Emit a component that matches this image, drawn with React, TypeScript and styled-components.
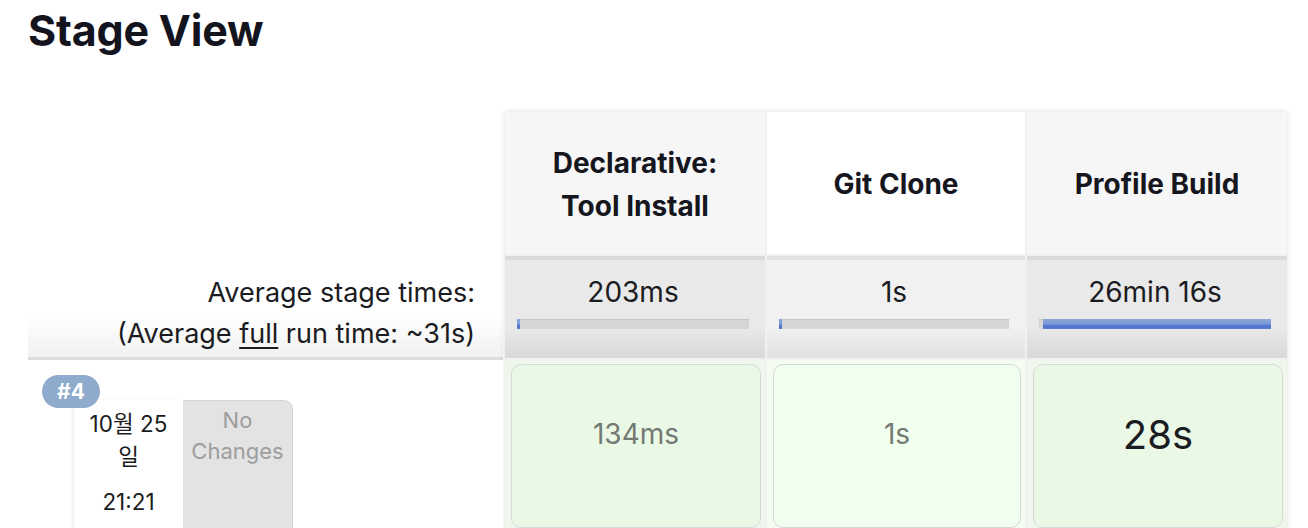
import React from "react";
import styled, { createGlobalStyle } from "styled-components";

const Global = createGlobalStyle`
  html, body { margin: 0; padding: 0; background: #fff; }
  body { font-family: "Inter", "Noto Sans CJK KR", sans-serif; color: #14141f; }
  * { box-sizing: border-box; }
`;

const Page = styled.div`
  width: 1308px;
  height: 528px;
  overflow: hidden;
  padding-left: 28px;
`;

const Title = styled.h1`
  margin: 0;
  padding-top: 6px;
  height: 54px;
  font-size: 43px;
  line-height: 48px;
  font-weight: 700;
  letter-spacing: -0.2px;
  color: #14141f;
`;

const Board = styled.div`
  display: flex;
  gap: 2px;
  margin-top: 58px;
`;

const LabelColumn = styled.div`
  width: 475px;
  display: flex;
  flex-direction: column;
`;

const HeadSpacer = styled.div`
  height: 142px;
`;

const AverageLabel = styled.div`
  height: 106px;
  padding: 18px 28px 0 0;
  text-align: right;
  font-size: 27px;
  line-height: 41px;
  color: #1b1b22;
  background: linear-gradient(to bottom, #ffffff 0%, #ffffff 60%, #f1f1f1 100%);
  border-bottom: 3px solid #dcdcdc;
  u { text-decoration-thickness: 2px; text-underline-offset: 4px; }
`;

const BuildLabel = styled.div`
  position: relative;
  height: 170px;
  padding: 40px 0 0 45px;
  background: #fff;
`;

const Badge = styled.div`
  position: absolute;
  left: 14px;
  top: 15px;
  width: 58px;
  height: 33px;
  border-radius: 17px;
  background: #8eaacd;
  color: #fff;
  font-weight: 700;
  font-size: 21px;
  line-height: 33px;
  text-align: center;
  z-index: 2;
`;

const BuildBox = styled.div`
  display: flex;
`;

const DateBox = styled.div`
  width: 110px;
  height: 130px;
  background: #fff;
  border-left: 1px solid #ececec;
  box-shadow: -1px 0 2px rgba(0, 0, 0, 0.06);
  padding-top: 7px;
  text-align: center;
  font-size: 22.5px;
  line-height: 33px;
  color: #1b1b22;
`;

const TimeLine = styled.div`
  margin-top: 12px;
`;

const ChangesBox = styled.div`
  width: 110px;
  height: 130px;
  background: #e3e3e3;
  border: 1px solid #d4d4d4;
  border-left: none;
  border-top-right-radius: 9px;
  padding-top: 4px;
  text-align: center;
  font-size: 22px;
  line-height: 31px;
  color: #9d9d9d;
`;

const StageTable = styled.div`
  display: grid;
  grid-template-columns: 260px 258px 260px;
  grid-template-rows: 142px 102px 170px;
  gap: 2px;
  background: #f1f1f1;
  box-shadow: 0 0 6px rgba(0, 0, 0, 0.14);
`;

const HeaderCell = styled.div<{ $even?: boolean }>`
  display: flex;
  align-items: center;
  justify-content: center;
  text-align: center;
  padding: 3px 16px 0;
  background: ${(p) => (p.$even ? "#ffffff" : "#f6f6f6")};
  font-size: 28px;
  line-height: 43px;
  font-weight: 700;
  color: #16161f;
`;

const AverageCell = styled.div<{ $even?: boolean }>`
  display: flex;
  flex-direction: column;
  align-items: stretch;
  padding: 16px 16px 0 12px;
  background: ${(p) =>
    p.$even
      ? "linear-gradient(to bottom, #e2e2e2 0, #e2e2e2 4px, #f1f1f1 4px, #f1f1f1 70%, #e1e1e1 100%)"
      : "linear-gradient(to bottom, #dadada 0, #dadada 4px, #e9e9e9 4px, #e9e9e9 70%, #d8d8d8 100%)"};
`;

const AverageValue = styled.div`
  text-align: center;
  font-size: 28px;
  line-height: 40px;
  color: #1b1b22;
`;

const Bar = styled.div`
  margin-top: 7px;
  height: 10px;
  background: #d6d6d6;
  box-shadow: inset 0 1px 1px rgba(0, 0, 0, 0.08);
  display: flex;
`;

const BarFill = styled.div`
  height: 100%;
  background: linear-gradient(to bottom, #89a5d8 0%, #7b99d5 50%, #4b70cf 70%, #5d7fd2 100%);
`;

const StageCell = styled.div<{ $even?: boolean }>`
  padding: 4px 4px 0 6px;
  background: ${(p) => (p.$even ? "#f5fdf3" : "#eff7ed")};
`;

const StageCard = styled.div<{ $even?: boolean; $big?: boolean }>`
  height: 164px;
  display: flex;
  align-items: center;
  justify-content: center;
  padding-bottom: 24px;
  border: 1.5px solid #d8d8d8;
  border-radius: 10px;
  background: ${(p) => (p.$even ? "#f1ffee" : "#eaf8e6")};
  font-size: ${(p) => (p.$big ? "40px" : "28px")};
  color: ${(p) => (p.$big ? "#1b1b22" : "#737a73")};
`;

const stages = [
  { name: ["Declarative:", "Tool Install"], avg: "203ms", offset: 0, fill: 3, last: "134ms", big: false },
  { name: ["Git Clone"], avg: "1s", offset: 0, fill: 3, last: "1s", big: false },
  { name: ["Profile Build"], avg: "26min 16s", offset: 4, fill: 228, last: "28s", big: true },
];

export default function App() {
  return (
    <>
      <Global />
      <Page>
        <Title>Stage View</Title>
        <Board>
          <LabelColumn>
            <HeadSpacer />
            <AverageLabel>
              Average stage times:
              <br />
              (Average <u>full</u> run time: ~31s)
            </AverageLabel>
            <BuildLabel>
              <Badge>#4</Badge>
              <BuildBox>
                <DateBox>
                  10월 25
                  <br />일<TimeLine>21:21</TimeLine>
                </DateBox>
                <ChangesBox>
                  No
                  <br />
                  Changes
                </ChangesBox>
              </BuildBox>
            </BuildLabel>
          </LabelColumn>
          <StageTable>
            {stages.map((s, i) => (
              <HeaderCell key={"h" + i} $even={i === 1}>
                <div>
                  {s.name.map((n, j) => (
                    <div key={j}>{n}</div>
                  ))}
                </div>
              </HeaderCell>
            ))}
            {stages.map((s, i) => (
              <AverageCell key={"a" + i} $even={i === 1}>
                <AverageValue>{s.avg}</AverageValue>
                <Bar>
                  <BarFill style={{ marginLeft: s.offset, width: s.fill }} />
                </Bar>
              </AverageCell>
            ))}
            {stages.map((s, i) => (
              <StageCell key={"c" + i} $even={i === 1}>
                <StageCard $even={i === 1} $big={s.big}>
                  {s.last}
                </StageCard>
              </StageCell>
            ))}
          </StageTable>
        </Board>
      </Page>
    </>
  );
}
